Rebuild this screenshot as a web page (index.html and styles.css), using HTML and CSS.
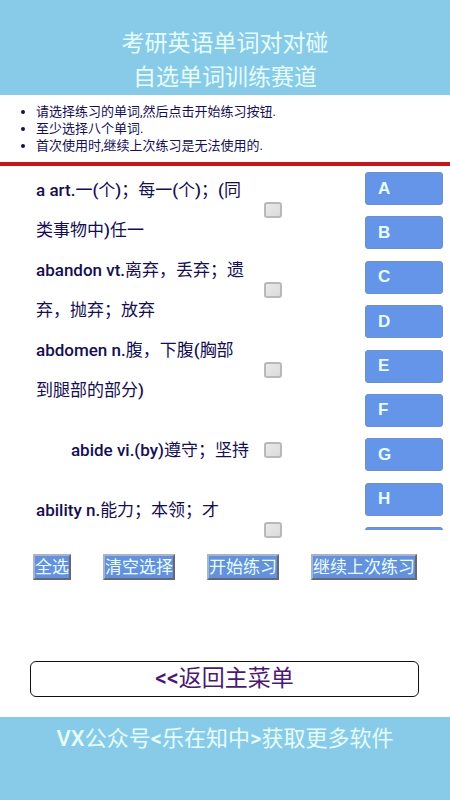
FILE: index.html
```html
<!DOCTYPE html>
<html lang="zh-CN">
<head>
<meta charset="utf-8">
<meta name="viewport" content="width=device-width, initial-scale=1">
<title>考研英语单词对对碰</title>
<link rel="stylesheet" href="styles.css">
</head>
<body>
<header class="banner">
  <h1>考研英语单词对对碰<br>自选单词训练赛道</h1>
</header>
<ul class="tips">
  <li>请选择练习的单词,然后点击开始练习按钮.</li>
  <li>至少选择八个单词.</li>
  <li>首次使用时,继续上次练习是无法使用的.</li>
</ul>
<main>
  <div class="picker">
    <div class="words">
      <div class="word"><label for="w1"><b>a art.</b>一<b>(</b>个<b>)</b>；每一<b>(</b>个<b>)</b>；<b>(</b>同类事物中<b>)</b>任一</label><input type="checkbox" id="w1"></div>
      <div class="word"><label for="w2"><b>abandon vt.</b>离弃，丢弃；遗弃，抛弃；放弃</label><input type="checkbox" id="w2"></div>
      <div class="word"><label for="w3"><b>abdomen n.</b>腹，下腹<b>(</b>胸部到腿部的部分<b>)</b></label><input type="checkbox" id="w3"></div>
      <div class="word"><label for="w4"><b>abide vi.(by)</b>遵守；坚持</label><input type="checkbox" id="w4"></div>
      <div class="word word-top"><label for="w5"><b>ability n.</b>能力；本领；才</label><input type="checkbox" id="w5"></div>
    </div>
    <nav class="letters">
      <div class="letter-list">
        <button type="button">A</button>
        <button type="button">B</button>
        <button type="button">C</button>
        <button type="button">D</button>
        <button type="button">E</button>
        <button type="button">F</button>
        <button type="button">G</button>
        <button type="button">H</button>
        <button type="button" aria-label="I"></button>
      </div>
    </nav>
  </div>
  <div class="actions">
    <button type="button">全选</button>
    <button type="button">清空选择</button>
    <button type="button">开始练习</button>
    <button type="button">继续上次练习</button>
  </div>
  <a class="back" href="#"><b>&lt;&lt;</b>返回主菜单</a>
</main>
<footer class="footer"><b>VX</b>公众号<b>&lt;</b>乐在知中<b>&gt;</b>获取更多软件</footer>
</body>
</html>
```

FILE: styles.css
```css
* {
  box-sizing: border-box;
}

body {
  display: flex;
  flex-direction: column;
  min-height: 100vh;
  margin: 0;
  background: #fff;
  color: #150f50;
  font-family: Roboto, "Noto Sans CJK SC", sans-serif;
  font-weight: 400;
}

b {
  font-weight: 500;
}

button {
  font: inherit;
  cursor: pointer;
}

.banner {
  padding: 27px 0 0;
  background: #88cbe9;
  color: #e6fdfb;
  text-align: center;
}

.banner h1 {
  margin: 0;
  font-size: 23px;
  font-weight: 400;
  line-height: 34px;
}

.tips {
  margin: 0;
  padding: 8px 0 8px 36px;
  border-bottom: 4px solid #c4161c;
  font-size: 13px;
  line-height: 17px;
}

.picker {
  display: flex;
  justify-content: space-between;
  padding: 4px 7px 0 36px;
}

.words {
  height: 370px;
  overflow: hidden;
}

.word {
  display: flex;
  align-items: center;
  justify-content: flex-end;
  gap: 15px;
  min-height: 80px;
  font-size: 17px;
  line-height: 40px;
}

.word label {
  max-width: 213px;
}

.word-top label {
  flex: 1;
  align-self: flex-start;
}

.word input {
  appearance: none;
  flex: none;
  width: 18px;
  height: 16px;
  margin: 0;
  border: 2px solid #b9b9b9;
  border-radius: 3px;
  background: linear-gradient(135deg, #e9e9e9, #dcdcdc);
}

.word input:checked {
  background: #6495ed;
}

.letters {
  width: 78px;
  height: 358px;
  margin-top: 2px;
  overflow: hidden;
}

.letter-list {
  display: flex;
  flex-direction: column;
  justify-content: space-between;
  height: 388px;
}

.letter-list button {
  height: 33px;
  padding: 0 12px;
  border: 1px solid #6f8fc9;
  border-radius: 3px;
  background: #6495e8;
  color: #e6fdfb;
  font-family: "Liberation Sans", sans-serif;
  font-size: 17px;
  font-weight: 700;
  text-align: left;
}

.actions {
  display: flex;
  justify-content: space-between;
  padding: 14px 33px 0;
}

.actions button {
  padding: 0;
  border: 2px outset #a9b4c8;
  background: #6490dc;
  color: #e6fdfb;
  font-size: 17px;
  line-height: 22px;
}

.back {
  display: block;
  margin: 81px 31px 20px 30px;
  border: 1px solid #111;
  border-radius: 6px;
  color: #4b1a70;
  font-size: 23px;
  line-height: 34px;
  text-align: center;
  text-decoration: none;
}

.footer {
  flex: 1;
  padding-top: 5px;
  background: #88cbe9;
  color: #e6fdfb;
  font-size: 22px;
  line-height: 34px;
  text-align: center;
}
```
